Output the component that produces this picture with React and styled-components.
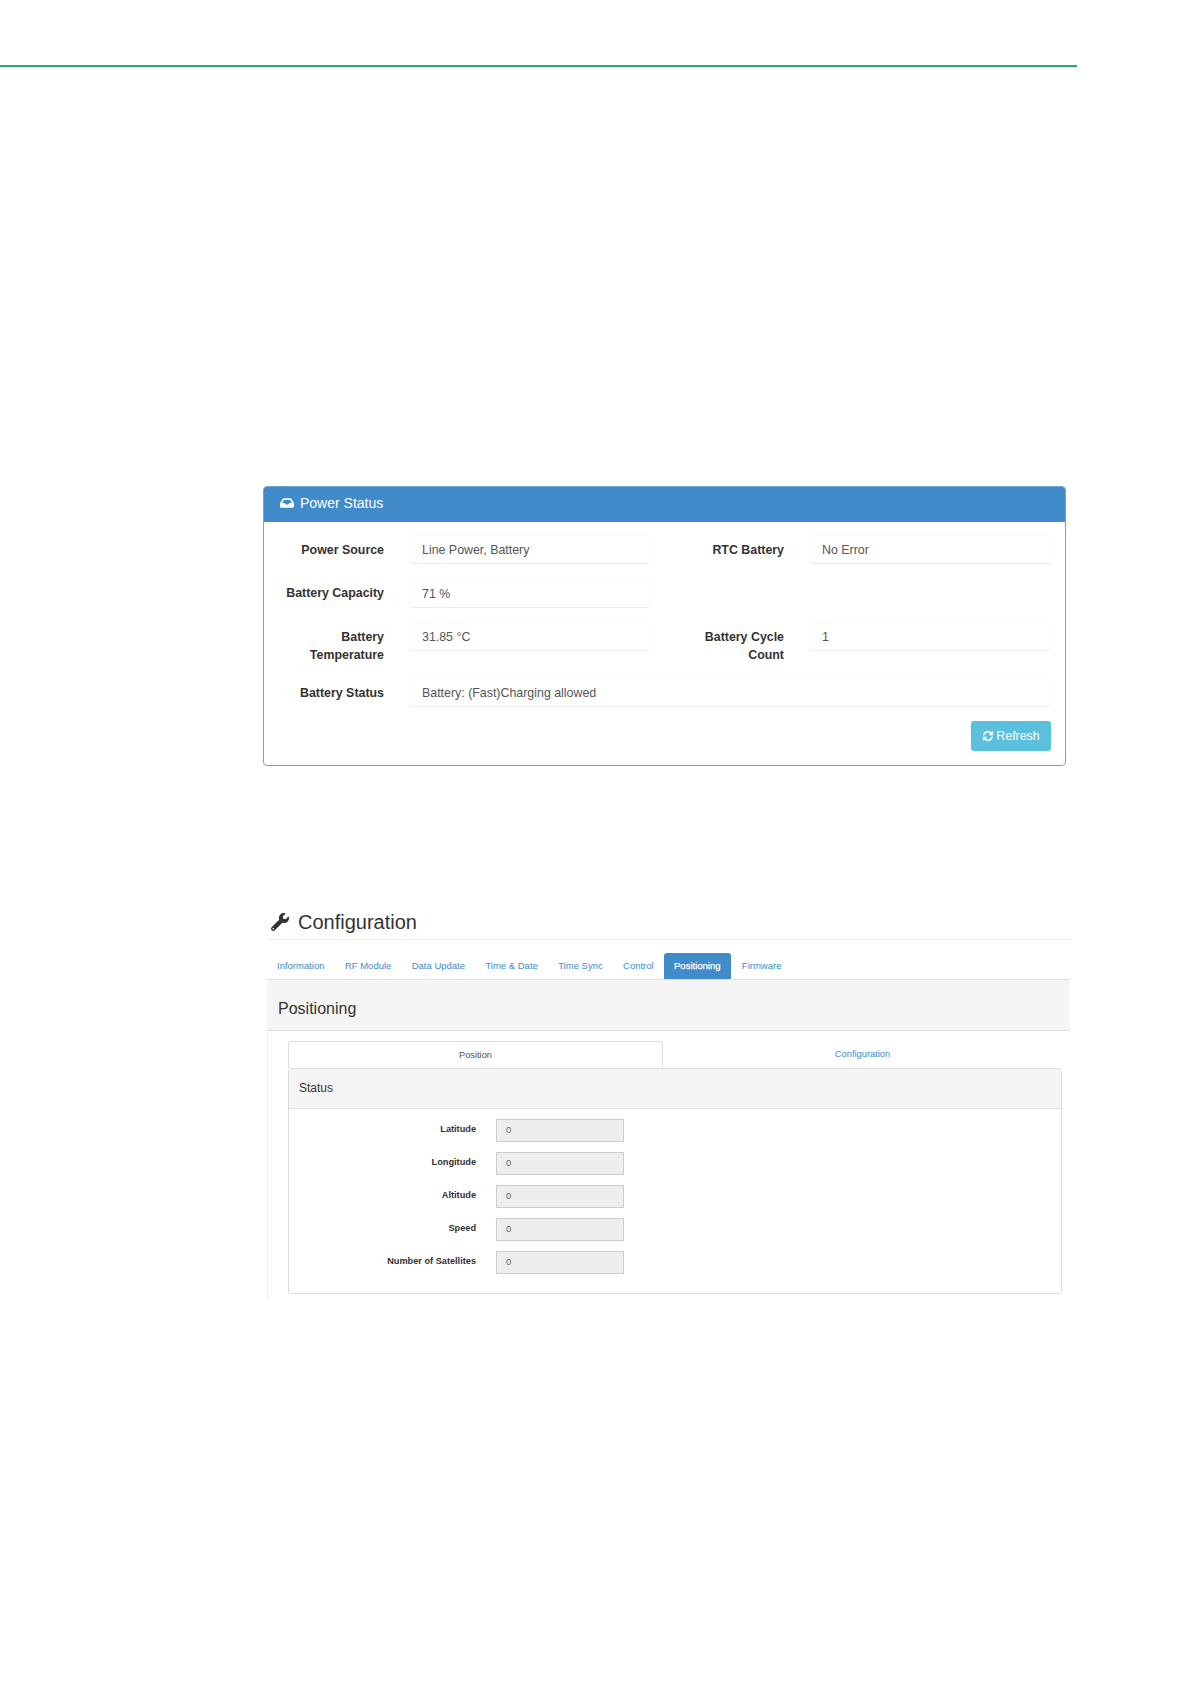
import React from 'react'
import styled, { createGlobalStyle } from 'styled-components'
import { FaInbox, FaWrench } from 'react-icons/fa'

const GlobalStyle = createGlobalStyle`
  body {
    margin: 0;
    background: #fff;
    font-family: "Liberation Sans", Arial, sans-serif;
  }
`

const tabs = ['Information', 'RF Module', 'Data Update', 'Time & Date', 'Time Sync', 'Control', 'Positioning', 'Firmware']
const positions = ['Latitude', 'Longitude', 'Altitude', 'Speed', 'Number of Satellites']

const RefreshIcon = () => (
  <svg width="12" height="12" viewBox="0 0 1792 1792" fill="currentColor">
    <path d="M1639 1056q0 5-1 7-64 268-268 434.5t-478 166.5q-146 0-282.5-55t-243.5-157l-129 129q-19 19-45 19t-45-19-19-45v-448q0-26 19-45t45-19h448q26 0 45 19t19 45-19 45l-137 137q71 66 161 102t187 36q134 0 250-65t186-179q11-17 53-117 8-23 30-23h192q13 0 22.5 9.5t9.5 22.5zm25-800v448q0 26-19 45t-45 19h-448q-26 0-45-19t-19-45 19-45l138-138q-148-137-349-137-134 0-250 65t-186 179q-11 17-53 117-8 23-30 23h-199q-13 0-22.5-9.5t-9.5-22.5v-7q65-268 270-434.5t480-166.5q146 0 284 55.5t245 156.5l130-129q19-19 45-19t45 19 19 45z" />
  </svg>
)

const App = () => {
  return (
    <Page>
      <GlobalStyle />
      <TopLine />

      <PowerPanel>
        <PowerHeader>
          <FaInbox size={14} />
          <span>Power Status</span>
        </PowerHeader>
        <PowerBody>
          <PowerRow>
            <PowerLabel>Power Source</PowerLabel>
            <PowerField>Line Power, Battery</PowerField>
            <PowerLabel $second>RTC Battery</PowerLabel>
            <PowerField $wide>No Error</PowerField>
          </PowerRow>
          <PowerRow>
            <PowerLabel>Battery Capacity</PowerLabel>
            <PowerField>71 %</PowerField>
          </PowerRow>
          <PowerRow>
            <PowerLabel>Battery<br />Temperature</PowerLabel>
            <PowerField>31.85 °C</PowerField>
            <PowerLabel $second>Battery Cycle<br />Count</PowerLabel>
            <PowerField $wide>1</PowerField>
          </PowerRow>
          <PowerRow>
            <PowerLabel>Battery Status</PowerLabel>
            <PowerField $wide>Battery: (Fast)Charging allowed</PowerField>
          </PowerRow>
          <ButtonRow>
            <RefreshButton>
              <RefreshIcon />
              Refresh
            </RefreshButton>
          </ButtonRow>
        </PowerBody>
      </PowerPanel>

      <ConfigSection>
        <ConfigTitle>
          <FaWrench size={18} color="#333" />
          <h1>Configuration</h1>
        </ConfigTitle>
        <TabBar>
          {tabs.map((tab) => (
            <Tab key={tab} $active={tab === 'Positioning'}>{tab}</Tab>
          ))}
        </TabBar>
        <SectionHead>Positioning</SectionHead>
        <SectionBody>
          <SubTabs>
            <SubTab $active>Position</SubTab>
            <SubTab>Configuration</SubTab>
          </SubTabs>
          <StatusPanel>
            <StatusHead>Status</StatusHead>
            <StatusBody>
              {positions.map((name) => (
                <StatusRow key={name}>
                  <StatusLabel>{name}</StatusLabel>
                  <StatusInput>0</StatusInput>
                </StatusRow>
              ))}
            </StatusBody>
          </StatusPanel>
        </SectionBody>
      </ConfigSection>
    </Page>
  )
}

const Page = styled.div`
  height: 1684px;
  padding-top: 65px;
  box-sizing: border-box;
  overflow: hidden;
`

const TopLine = styled.div`
  width: 1077px;
  height: 2px;
  background: #2ea872;
`

// Power Status
const PowerPanel = styled.div`
  width: 803px;
  margin: 419px 0 0 263px;
  border: 1px solid #6fa3d6;
  border-radius: 4px;
  box-sizing: border-box;
  overflow: hidden;
`

const PowerHeader = styled.div`
  display: flex;
  align-items: center;
  gap: 6px;
  box-sizing: border-box;
  height: 35px;
  padding: 0 0 4px 16px;
  background: #428bca;
  color: #fff;
  font-size: 14px;
`

const PowerBody = styled.div`
  padding: 13px 14px 14px 0;
`

const PowerRow = styled.div`
  display: flex;
  align-items: flex-start;
  margin-bottom: 14.5px;
  font-size: 12.4px;
`

const PowerLabel = styled.div`
  box-sizing: border-box;
  flex: none;
  width: ${({ $second }) => ($second ? '134px' : '120px')};
  margin-right: 26px;
  padding-top: 5.5px;
  line-height: 18px;
  text-align: right;
  font-weight: bold;
  color: #333;
`

const PowerField = styled.div`
  box-sizing: border-box;
  flex: ${({ $wide }) => ($wide ? '1' : 'none')};
  width: ${({ $wide }) => ($wide ? 'auto' : '240px')};
  height: 29px;
  padding: 5px 10px 5px 11px;
  line-height: 18px;
  color: #555;
  border: 1px solid #fafafa;
  border-bottom-color: #ececec;
  border-radius: 3px;
`

const ButtonRow = styled.div`
  display: flex;
  justify-content: flex-end;
  margin-top: -0.5px;
`

const RefreshButton = styled.button`
  display: flex;
  align-items: center;
  justify-content: center;
  gap: 2px;
  width: 80px;
  height: 30px;
  padding: 0;
  border: none;
  border-radius: 3px;
  background: #5bc0de;
  color: #fff;
  font-family: inherit;
  font-size: 12.4px;
`

// Configuration
const ConfigSection = styled.div`
  width: 803px;
  margin: 139px 0 0 267px;
`

const ConfigTitle = styled.div`
  display: flex;
  align-items: center;
  gap: 9px;
  height: 34px;
  padding-left: 4px;
  border-bottom: 1px solid #eee;

  h1 {
    margin: 0;
    font-size: 20px;
    font-weight: normal;
    color: #333;
  }
`

const TabBar = styled.div`
  display: flex;
  gap: 1.35px;
  height: 26px;
  margin-top: 13px;
  border-bottom: 1px solid #ddd;
`

const Tab = styled.div`
  display: flex;
  align-items: center;
  justify-content: center;
  padding: 0 ${({ $active }) => ($active ? '10px' : '9px')} 2px;
  margin-left: ${({ $active }) => ($active ? '0' : '1px')};
  border-radius: 3px 3px 0 0;
  font-size: 9.5px;
  background: ${({ $active }) => ($active ? '#428bca' : 'transparent')};
  color: ${({ $active }) => ($active ? '#fff' : '#428bca')};
  -webkit-text-stroke: ${({ $active }) => ($active ? '0.25px' : '0')};
`

const SectionHead = styled.div`
  box-sizing: border-box;
  height: 51px;
  padding: 4px 0 0 11px;
  line-height: 50px;
  background: #f5f5f5;
  border-bottom: 1px solid #ddd;
  font-size: 16px;
  color: #333;
`

const SectionBody = styled.div`
  padding: 10px 8px 6px 20px;
  border-left: 1px solid #eee;
`

const SubTabs = styled.div`
  display: flex;
  height: 27px;
`

const SubTab = styled.div`
  flex: ${({ $active }) => ($active ? 'none' : '1')};
  width: ${({ $active }) => ($active ? '375px' : 'auto')};
  box-sizing: border-box;
  text-align: center;
  line-height: 26px;
  font-size: 9.3px;
  color: ${({ $active }) => ($active ? '#555' : '#428bca')};
  border: ${({ $active }) => ($active ? '1px solid #ddd' : 'none')};
  border-bottom: none;
  border-radius: 3px 3px 0 0;
`

const StatusPanel = styled.div`
  border: 1px solid #ddd;
  border-radius: 3px;
`

const StatusHead = styled.div`
  height: 39px;
  padding-left: 10px;
  line-height: 39px;
  background: #f5f5f5;
  border-bottom: 1px solid #ddd;
  font-size: 12px;
  color: #333;
`

const StatusBody = styled.div`
  display: flex;
  flex-direction: column;
  gap: 10px;
  padding: 10px 0 19px;
`

const StatusRow = styled.div`
  display: flex;
  align-items: flex-start;
  gap: 20px;
`

const StatusLabel = styled.div`
  width: 187px;
  padding-top: 5px;
  text-align: right;
  font-size: 9.2px;
  font-weight: bold;
  color: #333;
`

const StatusInput = styled.div`
  box-sizing: border-box;
  width: 128px;
  height: 23px;
  padding-left: 9px;
  line-height: 20px;
  font-size: 9.5px;
  color: #666;
  background: #eee;
  border: 1px solid #ccc;
`

export default App
